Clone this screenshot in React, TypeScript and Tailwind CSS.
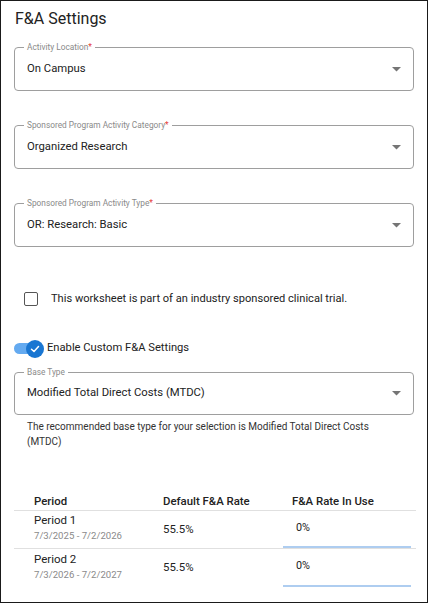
import React from "react";

const font = { fontFamily: "Roboto, 'Liberation Sans', sans-serif" };

function Arrow() {
  return (
    <svg width="9" height="5" viewBox="0 0 9 5" className="shrink-0">
      <path d="M0 0 L9 0 L4.5 4.5 Z" fill="#757575" />
    </svg>
  );
}

function SelectField({ label, value, required = true, h = "h-[44px]" }: { label: string; value: string; required?: boolean; h?: string }) {
  return (
    <div className={"relative rounded-[4px] border border-[#9e9e9e] flex items-center pl-[12px] pr-[12px] " + h}>
      <div className="absolute left-[9px] top-[-6px] bg-white px-[3px] text-[8.3px] leading-[10px] text-[#8a8a8a]">
        {label}
        {required && <span className="text-[#e53935]">*</span>}
      </div>
      <span className="flex-1 text-[11.3px] text-[#222]">{value}</span>
      <Arrow />
    </div>
  );
}

export default function App() {
  return (
    <div style={font} className="w-[428px] h-[603px] border border-[#1a1a1a] bg-white px-[13px] text-[#222] overflow-hidden">
      <h1 className="pt-[7px] text-[16px] leading-[22px] text-[#222] pl-[1px]">F&amp;A Settings</h1>
      <div className="mt-[17px]">
        <SelectField label="Activity Location" value="On Campus" />
      </div>
      <div className="mt-[34px]">
        <SelectField label="Sponsored Program Activity Category" value="Organized Research" />
      </div>
      <div className="mt-[34px]">
        <SelectField label="Sponsored Program Activity Type" value="OR: Research: Basic" />
      </div>
      <div className="mt-[44px] flex items-center pl-[10px] gap-[13px]">
        <div className="w-[14px] h-[14px] rounded-[2px] border-[1.5px] border-[#555]" />
        <span className="text-[11.1px] text-[#222]">This worksheet is part of an industry sponsored clinical trial.</span>
      </div>
      <div className="mt-[32px] flex items-center gap-[3px]">
        <div className="relative w-[30px] h-[18px] flex items-center">
          <div className="w-[26px] h-[11px] rounded-full bg-[#64aaf0]" />
          <div className="absolute right-[0px] top-0 w-[18px] h-[18px] rounded-full bg-[#1976d2] flex items-center justify-center">
            <svg width="12" height="12" viewBox="0 0 24 24">
              <path d="M5 12.5 L10 17 L19 7" fill="none" stroke="white" strokeWidth="3" strokeLinecap="round" strokeLinejoin="round" />
            </svg>
          </div>
        </div>
        <span className="text-[11.2px] text-[#222]">Enable Custom F&amp;A Settings</span>
      </div>
      <div className="mt-[14px]">
        <SelectField label="Base Type" value="Modified Total Direct Costs (MTDC)" required={false} h="h-[43px]" />
      </div>
      <p className="mt-[4px] pl-[13px] pr-[20px] text-[10px] leading-[15px] text-[#333]">
        The recommended base type for your selection is Modified Total Direct Costs (MTDC)
      </p>
      <div className="mt-[43px] mr-[-2px]">
        <div className="grid grid-cols-[149px_129px_1fr] border-b border-[#e0e0e0] h-[19px] pt-[2px] items-start text-[11.4px] leading-[15px] font-medium text-[#222]">
          <span className="pl-[20px]">Period</span>
          <span>Default F&amp;A Rate</span>
          <span>F&amp;A Rate In Use</span>
        </div>
        {[
          ["Period 1", "7/3/2025 - 7/2/2026"],
          ["Period 2", "7/3/2026 - 7/2/2027"],
        ].map(([p, d], i) => (
          <div key={p} className={"grid grid-cols-[149px_129px_1fr] h-[38px] items-center " + (i === 0 ? "border-b border-[#e0e0e0]" : "")}>
            <div className="pl-[20px] flex flex-col pb-[2px]">
              <span className="text-[11.5px] leading-[16px] text-[#222]">{p}</span>
              <span className="text-[9.6px] leading-[16px] text-[#8a8a8a]">{d}</span>
            </div>
            <span className="text-[11.4px] text-[#222]">55.5%</span>
            <div className="relative h-full">
              <div className="h-full border-b-[2px] border-[#aecdf0] flex items-center pb-[1px] pl-[13px] text-[10.8px] text-[#222] ml-[-9px] mr-[5px]">0%</div>
            </div>
          </div>
        ))}
      </div>
    </div>
  );
}
